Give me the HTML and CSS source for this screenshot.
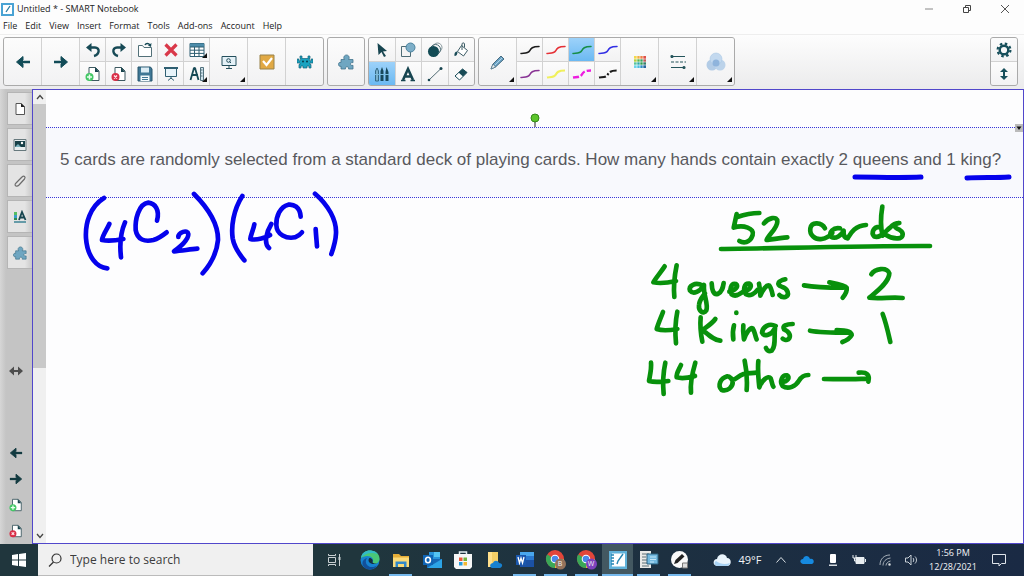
FILE: index.html
```html
<!DOCTYPE html>
<html lang="en">
<head>
<meta charset="utf-8">
<title>Untitled * - SMART Notebook</title>
<link rel="stylesheet" href="styles.css">
</head>
<body>
<svg class="sprites" aria-hidden="true">
  <symbol id="left" viewBox="0 0 16 16"><path d="M15 8H4" stroke="currentColor" stroke-width="2.6"/><path d="M8 2.500 1.500 8 8 13.500V10L6 8l2-2z" fill="currentColor" stroke="currentColor"/></symbol>
  <symbol id="right" viewBox="0 0 16 16"><path d="M1 8h11" stroke="currentColor" stroke-width="2.6"/><path d="M8 2.500 14.500 8 8 13.500V10l2-2-2-2z" fill="currentColor" stroke="currentColor"/></symbol>
  <symbol id="page-add" viewBox="0 0 16 16"><path d="M4 1.500h6.500L14 5v9.500H4z" fill="#fff" stroke="#3d5960"/><path d="M10 1v5h4z" fill="#17434c"/><circle cx="4.500" cy="11" r="4" fill="#43c765"/><path d="M4.500 8.500v5M2 11h5" stroke="#e9fff0" stroke-width="1.500"/></symbol>
  <symbol id="page-del" viewBox="0 0 16 16"><path d="M4 1.500h6.500L14 5v9.500H4z" fill="#fff" stroke="#3d5960"/><path d="M10 1v5h4z" fill="#17434c"/><circle cx="4.500" cy="11" r="4" fill="#d92f48"/><path d="m3 9.500 3 3m0-3-3 3" stroke="#ffe6ea" stroke-width="1.400"/></symbol>
  <symbol id="puzzle" viewBox="0 0 16 16"><path d="M3 5.500h3.500C5 4 6 1 8.500 1S12 4 10.500 5.500H15v3.200c-1.500-.5-2.500.2-2.500 1.300s1 1.800 2.500 1.300V15h-4.500c.5-1.500-.5-2.200-1.500-2.200S7 13.500 7.500 15H3v-2.800C1.500 12.800.500 11.800.500 10.300S1.500 8 3 8.500z" fill="#6fa6c1" stroke="#44758d" stroke-width=".8"/></symbol>
  <symbol id="curve" viewBox="0 0 20 10"><path d="M1 8.500C4 8 8 8.500 9.500 6S12 1.500 19 1.500" fill="none" stroke="currentColor" stroke-width="1.500" stroke-linecap="round"/></symbol>
  <symbol id="chrome" viewBox="0 0 22 22"><circle cx="10" cy="10" r="9" fill="#e2463a"/><path d="M10 10 2.200 5.500A9 9 0 0 0 10 19l4-7z" fill="#3aa757"/><path d="M10 10h9a9 9 0 0 1-9 9z" fill="#f8c335"/><circle cx="10" cy="10" r="4.300" fill="#fff"/><circle cx="10" cy="10" r="3.300" fill="#4a88ec"/></symbol>
</svg>

<header class="titlebar">
  <svg class="app-icon" viewBox="0 0 13 13" aria-hidden="true"><path d="M1 1h11v11H1z" fill="#fff" stroke="#4aa3d4" stroke-width="2"/><path d="m5 9 4-6" stroke="#26799f" stroke-width="1.300"/></svg>
  <h1 class="title">Untitled * - SMART Notebook</h1>
  <div class="window-controls">
    <button aria-label="Minimize"><svg viewBox="0 0 10 10"><path d="M1 5h8" stroke="#888"/></svg></button>
    <button aria-label="Restore"><svg viewBox="0 0 10 10" fill="none" stroke="#444"><path d="M1.500 3.500h5v5h-5zM3.500 3V1.500h5v5H7"/></svg></button>
    <button aria-label="Close"><svg viewBox="0 0 10 10"><path d="m1 1 8 8m0-8-8 8" stroke="#555"/></svg></button>
  </div>
</header>

<nav class="menubar" aria-label="Menu">
  <button>File</button><button>Edit</button><button>View</button><button>Insert</button><button>Format</button><button>Tools</button><button>Add-ons</button><button>Account</button><button>Help</button>
</nav>

<div class="toolbar">
  <div class="group main-group">
    <button class="tall" aria-label="Previous page"><svg class="i16"><use href="#left"/></svg></button>
    <button class="tall" aria-label="Next page"><svg class="i16"><use href="#right"/></svg></button>
    <button aria-label="Undo"><svg class="i16" viewBox="0 0 16 16"><path d="M4 5.500h6c5 0 5 7-1 8.500" fill="none" stroke="#174a56" stroke-width="2.400"/><path d="M6.500 1 1 5.500 6.500 10z" fill="#174a56"/></svg></button>
    <button aria-label="Redo"><svg class="i16" viewBox="0 0 16 16"><path d="M12 5.500H6c-5 0-5 7 1 8.500" fill="none" stroke="#174a56" stroke-width="2.400"/><path d="M9.500 1 15 5.500 9.500 10z" fill="#174a56"/></svg></button>
    <button aria-label="Open"><svg class="i16" viewBox="0 0 16 16" fill="none" stroke="#527078"><path d="M1.500 14.500v-11h4l1.500 2h7.500v9z" fill="#fff"/><path d="M8 3c1-2 3.500-2 5 0" stroke="#174a56" stroke-width="1.500"/><path d="m14.500 1-.5 4-3-1.500z" fill="#174a56" stroke="none"/></svg></button>
    <button aria-label="Delete"><svg class="i16" viewBox="0 0 16 16"><path d="m2.500 2.500 11 11m0-11-11 11" stroke="#d93849" stroke-width="3.200"/></svg></button>
    <button class="more" aria-label="Table"><svg class="i16" viewBox="0 0 16 16"><path d="M1 1.500h14v13H1z" fill="#fff" stroke="#2f5f72"/><path d="M1 1.500h14V5H1z" fill="#4c8caa"/><path d="M1 5h14M1 8.200h14M1 11.400h14M5.500 5v9.500M10 5v9.500" stroke="#2f5f72"/></svg></button>
    <button class="tall more" aria-label="Screen shade"><svg class="i16" viewBox="0 0 16 16" fill="none" stroke="#244f5c"><path d="M1 2.500h14v9H1z" fill="#e4f1f7"/><path d="M5 14.500h6M8 11.500v3M10 9 8.500 7.500"/><circle cx="7.500" cy="6.500" r="1.800"/></svg></button>
    <button class="tall" aria-label="Assessment"><svg class="i16" viewBox="0 0 16 16"><path d="M1 1h14v14H1z" fill="#e1a944" stroke="#98824b"/><path d="m4 7 3.500 4L13 4" fill="none" stroke="#fff" stroke-width="2.200"/></svg></button>
    <button class="tall" aria-label="Activity builder"><svg class="i16" viewBox="0 0 16 16"><path d="M3 2h2v2.500h6V2h2v2.500h-1L13 7h1V5h2v4h-3v1.500h1V14h-2v-2h-2v2H6v-2H4v2H2v-3.500h1V9H0V5h2v2h1l1-2.500H3z" fill="#18a3c1" stroke="#17647c" stroke-width=".7"/><circle cx="6" cy="7.500" r="1" fill="#063b4b"/><circle cx="10" cy="7.500" r="1" fill="#063b4b"/></svg></button>
    <button aria-label="Add page"><svg class="i16"><use href="#page-add"/></svg></button>
    <button aria-label="Delete page"><svg class="i16"><use href="#page-del"/></svg></button>
    <button aria-label="Save"><svg class="i16" viewBox="0 0 16 16"><path d="M1 1h12.500L15 3v12H1z" fill="#3f7795" stroke="#28566c"/><path d="M4 1.500h8v5H4z" fill="#dcecf4"/><path d="M3.500 9.500h9V15h-9z" fill="#f4fafc"/><path d="M5 11.500h6M5 13.500h6" stroke="#3f7795"/></svg></button>
    <button aria-label="Screen"><svg class="i16" viewBox="0 0 16 16" fill="none" stroke="#2f5f72"><path d="M2.500 2.500h11v8h-11z" fill="#e8f4fa"/><path d="M1 2h14" stroke-width="2"/><path d="M8 10v3m-3 1.500L8 12l3 2.500"/></svg></button>
    <button class="more" aria-label="Measurement tools"><svg class="i16" viewBox="0 0 16 16" fill="none"><path d="M5 2 1.500 14M6 2l3.500 12M3 9h6" stroke="#174a56" stroke-width="1.800"/><circle cx="5.500" cy="2.500" r="1.500" fill="#174a56"/><path d="M11.500 1.500h3v13h-3z" fill="#cfe4ee" stroke="#52717d"/><path d="M12 4h1.500M12 7h1.500M12 10h1.500" stroke="#52717d"/></svg></button>
  </div>

  <div class="group addon-group">
    <button class="tall" aria-label="Add-ons"><svg class="i16"><use href="#puzzle"/></svg></button>
  </div>

  <div class="group tools-group">
    <button aria-label="Select"><svg class="i14" viewBox="0 0 14 14"><path d="M2.500 0 12 8 8 8.500l3 4.500-2 1-2.500-5L3.500 12z" fill="#174550"/></svg></button>
    <button aria-label="Shapes"><svg class="i16" viewBox="0 0 16 16"><path d="M1.500 4.500h9v10h-9z" fill="#f4f4f4" stroke="#4e6c76"/><circle cx="10.500" cy="5.500" r="4.500" fill="#7daec8" stroke="#4b839e"/></svg></button>
    <button aria-label="Regular polygons"><svg class="i16" viewBox="0 0 16 16"><circle cx="10.500" cy="5.500" r="4.500" fill="none" stroke="#8a9a9f"/><circle cx="8.500" cy="7.500" r="5" fill="none" stroke="#4b6b74"/><circle cx="6.500" cy="9.500" r="5.500" fill="#124a54"/></svg></button>
    <button aria-label="Fill"><svg class="i16" viewBox="0 0 16 16"><path d="m8.500 3.500 6 5-4 5.500-6-4.500z" fill="#fff" stroke="#3c5c65"/><path d="M9 8V2c0-1.500 2.500-1.500 2.500 0v3.500" fill="none" stroke="#3c5c65"/><path d="M4.500 9.500C2 9.500 1 11.500 1.500 14c2 0 3-1.500 3-4.500z" fill="#174a56"/></svg></button>
    <button class="active" aria-label="Pens"><svg class="i16" viewBox="0 0 16 16"><path d="M1.500 15V5L3 2l1.500 3v10z" fill="#7ab1cc" stroke="#336b88"/><path d="M6.500 15V5L8 1l1.500 4v10zM11.500 15V6l1-5 2 5v9z" fill="#17485c"/><path d="M1 8.500h14" stroke="#77bce0"/></svg></button>
    <button aria-label="Text"><svg class="i16" viewBox="0 0 16 16"><path d="m3 14 5-11 5 11M5 10.500h6" fill="none" stroke="#174550" stroke-width="2.600"/><path d="M1 14.500h4.500m5 0H15" stroke="#174550" stroke-width="1.500"/></svg></button>
    <button aria-label="Line"><svg class="i16" viewBox="0 0 16 16"><path d="M2 14 14 2.500" stroke="#526c74"/><circle cx="2" cy="14" r="1.300" fill="#174550"/><circle cx="14" cy="2.500" r="1.500" fill="#174550"/></svg></button>
    <button aria-label="Eraser"><svg class="i14" viewBox="0 0 14 14"><path d="M1 9 8.500 2 13 5.500 5.500 13z" fill="#fff" stroke="#174a56"/><path d="M4.500 5.500 8.500 2 13 5.500l-4 4z" fill="#174a56"/></svg></button>
  </div>

  <div class="group pens-group">
    <button class="tall more" aria-label="Pen type"><svg class="i16" viewBox="0 0 16 16"><path d="m1 15 2-5 8-8 3 3-8.500 8z" fill="#6aa2c4" stroke="#476b80"/><path d="m1 15 2-5 2.500 3z" fill="#e9edef" stroke="#476b80" stroke-width=".6"/><path d="M5 11 12 4" stroke="#b1d4e7"/></svg></button>
    <button aria-label="Black pen"><svg class="pen black"><use href="#curve"/></svg></button>
    <button aria-label="Red pen"><svg class="pen red"><use href="#curve"/></svg></button>
    <button class="active" aria-label="Green pen"><svg class="pen green"><use href="#curve"/></svg></button>
    <button aria-label="Blue pen"><svg class="pen blue"><use href="#curve"/></svg></button>
    <button class="tall more" aria-label="Color"><svg class="i12" viewBox="0 0 12 12"><path d="M0 0h3v3H0z" fill="#f3d94d"/><path d="M3 0h3v3H3z" fill="#f1ad43"/><path d="M6 0h3v3H6z" fill="#ed8249"/><path d="M9 0h3v3H9z" fill="#dd5148"/><path d="M0 3h3v3H0z" fill="#b3cf43"/><path d="M3 3h3v3H3z" fill="#58b44c"/><path d="M6 3h3v3H6z" fill="#3aa360"/><path d="M9 3h3v3H9z" fill="#bd5a58"/><path d="M0 6h3v3H0z" fill="#59c49c"/><path d="M3 6h3v3H3z" fill="#29a7a6"/><path d="M6 6h3v3H6z" fill="#2f9d50"/><path d="M9 6h3v3H9z" fill="#397e68"/><path d="M0 9h3v3H0z" fill="#6bd4ea"/><path d="M3 9h3v3H3z" fill="#4dbde0"/><path d="M6 9h3v3H6z" fill="#318fc5"/><path d="M9 9h3v3H9z" fill="#28679e"/><path d="M0 3h12M0 6h12M0 9h12M3 0v12M6 0v12M9 0v12" stroke="#fff" stroke-width=".6"/></svg></button>
    <button class="tall more" aria-label="Line style"><svg class="i16" viewBox="0 0 16 16" fill="none" stroke="#24545a" stroke-width="1.200"><path d="M2 2.500h13M1 13.500h13"/><path d="M1 8h15" stroke-dasharray="3 1.500"/><circle cx="2" cy="2.500" r="1" fill="#24545a"/><circle cx="14" cy="13.500" r="1" fill="#24545a"/></svg></button>
    <button class="tall more" aria-label="Transparency"><svg class="i20" viewBox="0 0 20 20"><circle cx="6" cy="13" r="5.500" fill="#b3cce6"/><circle cx="14" cy="13" r="5.500" fill="#bcd3ea"/><circle cx="10" cy="7" r="6" fill="#c3d9ef" stroke="#a9c7e4" stroke-width=".6"/><circle cx="10" cy="11" r="3.500" fill="#8fb4dc"/></svg></button>
    <button aria-label="Purple pen"><svg class="pen purple"><use href="#curve"/></svg></button>
    <button aria-label="Yellow highlighter"><svg class="pen yellow" viewBox="0 0 20 10"><path d="M1 8.500C4 8 8 8.500 9.500 6S12 1.500 19 1.500" fill="none" stroke="currentColor" stroke-width="2.200"/></svg></button>
    <button aria-label="Magenta dashed pen"><svg class="pen magenta" viewBox="0 0 20 10"><path d="M1 8.500C4 8 8 8.500 9.500 6S12 1.500 19 1.500" fill="none" stroke="currentColor" stroke-width="2.400" stroke-dasharray="6 2"/></svg></button>
    <button aria-label="Black dashed pen"><svg class="pen black" viewBox="0 0 20 10"><path d="M1 8.500C4 8 8 8.500 9.500 6S12 1.500 19 1.500" fill="none" stroke="currentColor" stroke-width="2.200" stroke-dasharray="7 2 2 2"/></svg></button>
  </div>

  <div class="group settings-group">
    <button aria-label="Customize toolbar"><svg class="i16" viewBox="0 0 16 16"><circle cx="8" cy="8" r="4.300" fill="none" stroke="#174f5b" stroke-width="2.400"/><circle cx="8" cy="8" r="6.400" fill="none" stroke="#174f5b" stroke-width="2.200" stroke-dasharray="2.500 2.530"/></svg></button>
    <button aria-label="Move toolbar"><svg class="i14" viewBox="0 0 14 14"><path d="M7 3v8" stroke="#174f5b" stroke-width="2"/><path d="m7 1 4 4H3zM7 13l4-4H3z" fill="#174f5b"/></svg></button>
  </div>
</div>

<main class="workspace">
  <aside class="sidebar">
    <div class="tabs">
      <button aria-label="Page sorter"><svg class="i14" viewBox="0 0 14 14"><path d="M3 1.500h5L11.500 5v7.500H3z" fill="#fff" stroke="#555"/><path d="M8 1v4h4z" fill="#222"/></svg></button>
      <button aria-label="Gallery"><svg class="i14" viewBox="0 0 14 14"><path d="M1 1.500h12v11H1z" fill="#e9eeef" stroke="#67797d"/><path d="M2 3h10v6H2z" fill="#174047"/><path d="m2 9 3-3 3 3z" fill="#79b2bd"/><circle cx="9" cy="5" r="1.200" fill="#fff"/></svg></button>
      <button aria-label="Attachments"><svg class="i14" viewBox="0 0 14 14"><path d="m3 9 6-6c2-2 4 0 2.500 2L6 11c-2 2-5 1-3.500-1.500L8 4" fill="none" stroke="#6c6c6c" stroke-width="1.200"/></svg></button>
      <button aria-label="Properties"><svg class="i14" viewBox="0 0 14 14"><path d="M1 2h3v3H1z" fill="#56bd62"/><path d="M1 5h3v3H1z" fill="#3b9fc9"/><path d="M1 8h3v2H1z" fill="#2e8c4f"/><path d="m6 10 3-8 3.500 8M7 7.500h4.500" fill="none" stroke="#174550" stroke-width="1.800"/><path d="M1 12h12" stroke="#3d8395" stroke-width="1.500"/></svg></button>
      <button aria-label="Add-ons tab"><svg class="i14"><use href="#puzzle"/></svg></button>
    </div>
    <button class="resize" aria-label="Move sidebar"><svg class="i16" viewBox="0 0 16 16"><path d="M3 8h10" stroke="#4d4d4d" stroke-width="2"/><path d="M6 3.500 1 8l5 4.500zm4 0L15 8l-5 4.500z" fill="#4d4d4d"/></svg></button>
    <div class="page-nav">
      <button aria-label="Back"><svg class="i14"><use href="#left"/></svg></button>
      <button aria-label="Forward"><svg class="i14"><use href="#right"/></svg></button>
      <button aria-label="Insert page"><svg class="i14"><use href="#page-add"/></svg></button>
      <button aria-label="Remove page"><svg class="i14"><use href="#page-del"/></svg></button>
    </div>
  </aside>

  <div class="scrollbar">
    <button aria-label="Scroll up"><svg viewBox="0 0 8 8"><path d="m1 6 3-3.500L7 6" fill="none" stroke="#444" stroke-width="1.300"/></svg></button>
    <div class="track"><div class="thumb"></div></div>
    <button aria-label="Scroll down"><svg viewBox="0 0 8 8"><path d="m1 2 3 3.500L7 2" fill="none" stroke="#444" stroke-width="1.300"/></svg></button>
  </div>

  <section class="canvas" aria-label="Page">
    <div class="question">
      <p>5 cards are randomly selected from a standard deck of playing cards. How many hands contain exactly 2 queens and 1 king?</p>
      <svg class="rotate-handle" viewBox="0 0 12 16" aria-hidden="true"><path d="M6 8v7" stroke="#222"/><circle cx="6" cy="6" r="4" fill="#5cc52b" stroke="#348819"/></svg>
      <button class="object-menu" aria-label="Object menu"><svg viewBox="0 0 8 8"><path d="M1.500 2.500h5L4 6z" fill="#111"/></svg></button>
    </div>
    <svg class="ink" viewBox="0 0 978 453" role="img" aria-label="Handwritten notes: (4C2)(4C1); 52 cards, 4 queens to 2, 4 kings to 1, 44 other">
      <g class="stroke-blue thick"><path d="M809 87c20 0 45 1 66 0M921 88c14-1 28 0 42-1"/></g>
      <svg x="24" y="90" width="290" height="110" viewBox="0 0 870 330" overflow="visible">
        <g class="stroke-blue">
          <path d="M102 54C60 80 45 130 48 175c4 55 32 87 64 90"/>
          <path d="M118 132c-8 18-20 33-22 48 19 4 49 0 64-3M165 127c-10 23-17 63-12 105"/>
          <path d="M261 122c9-32-6-52-26-54-30 4-40 52-38 82 5 30 28 36 53 30 18-5 30-15 40-23"/>
          <path d="M325 171c0-14 28-24 30-9 1 18-25 38-43 52 23-2 48-6 70-8"/>
          <path d="M372 42c38 38 73 88 72 138-4 45-24 75-46 100"/>
          <path d="M517 48c-27 42-34 92-29 127 5 30 22 50 35 66"/>
          <path d="M553 133c-3 17-11 32-12 44 19 5 49-5 59-12M604 132c-14 23-24 58-7 72"/>
          <path d="M692 110c-2-30-22-38-37-36-25 6-37 36-36 61 1 30 31 42 56 37 10-4 17-10 21-15"/>
          <path d="M737 147c1 18 3 38 4 52M735 41c40 34 65 79 63 119-1 25-8 45-14 62"/>
        </g>
      </svg>
      <svg x="594" y="105" width="300" height="110" viewBox="0 0 900 330" overflow="visible">
        <g class="stroke-green">
          <path d="M290 57l-9 41c29-10 64 2 57 22-8 25-28 25-40 18M292 66c23-8 48-12 66-12"/>
          <path d="M372 85c13-17 40-23 40-5 0 20-27 40-32 55 20-3 45-7 62-8"/>
          <path d="M555 100c-10-18-40-22-44 0-3 20 14 35 34 32 15-2 25-10 32-18M600 100c-20-4-34 12-27 25 14 9 32-5 38-18-1 13 2 22 12 23 8-12 18-37 55-40"/>
          <path d="M727 35c-5 30-5 65 1 87M722 96c-22-2-30 18-19 29 17 6 32-15 47-27 7-8 18-14 28-14-23 4-14 14 0 20 18 12 10 28-8 26-20 0-26-6-33-11"/>
          <path d="M243 162c157-2 457-10 627-9"/>
          <path d="M74 214c-14 21-26 34-34 48 20 4 50 0 68-4M110 211c-7 34-10 64-7 95"/>
          <path d="M188 272c-22-12-43 0-38 15 10 13 30 3 42-17-3 30 14 57 7 76-8 13-24 4-22-16 1-15 11-25 18-35"/>
          <path d="M215 265c1 18 4 35 18 32 14-6 16-20 18-33"/>
          <path d="M268 290c17-2 30-17 20-23-16-4-20 17-13 31 13 10 25-2 38-10 18-3 25-17 15-22-16-2-20 19-10 32 12 7 27-3 34-13"/>
          <path d="M357 266c3 15 4 25 4 36 7-17 19-34 27-30 6 8 8 18 10 28"/>
          <path d="M436 253c-21 5-29 15-11 22 20 5 23 25 13 30-10 3-16 0-20-5"/>
          <path d="M492 271c38 7 78 7 118 7M568 262c22 4 47 8 52 16 2 12-5 22-12 30"/>
          <path d="M694 238c11-18 46-23 54-3 0 27-38 55-60 73 32 4 72-3 100 1"/>
        </g>
      </svg>
      <svg x="594" y="210" width="300" height="110" viewBox="0 0 900 330" overflow="visible">
        <g class="stroke-green">
          <path d="M69 36c-7 19-14 34-19 51 20 7 45 3 62 0M112 35c-7 35-7 65-4 95"/>
          <path d="M182 52c-2 23 0 48 5 73M226 57c-11 15-26 23-38 33 17 15 34 30 53 32"/>
          <path d="M289 38v1M282 76c-4 14-4 29-2 42"/>
          <path d="M310 76c-2 19 0 29 2 42 6-18 18-36 26-33 7 10 7 23 12 33"/>
          <path d="M407 78c-19-10-39 2-41 20 6 14 29 7 39-13-3 25 3 55-10 67-10 4-15-2-17-8"/>
          <path d="M458 72c-18 0-33 6-26 16 16 7 23 20 13 30-7 4-15 0-17-2"/>
          <path d="M510 92c30 6 80 6 120 6M590 90c25 0 45 5 45 15-5 10-17 17-28 21"/>
          <path d="M728 42c10 26 17 58 23 84"/>
          <path d="M33 188c2 17-3 37-6 55 18 5 43 2 58 0M76 188c-6 27-8 62-5 94"/>
          <path d="M123 195c-8 17-15 27-13 37 20 6 40 0 55-4M166 188c-8 27-16 62-13 90"/>
          <path d="M262 229c-22 6-30 29-17 41 17 5 35-8 33-27-6-13-16-18-23-11M277 240c12-2 16-12 34-18 13-3 25-2 39-4"/>
          <path d="M314 182c6 28 8 58 6 88M355 183c-2 22 0 52 3 79 7-22 27-37 34-27 4 10 4 20 8 25"/>
          <path d="M425 246c17 0 27-14 16-20-15-2-23 19-13 32 17 12 40 0 49-16 9-16 18-17 28-17"/>
          <path d="M552 237c48 1 88 1 130-1M656 218c26-3 34 7 29 27"/>
        </g>
      </svg>
    </svg>
  </section>
</main>

<footer class="taskbar">
  <button class="start" aria-label="Start"><svg viewBox="0 0 14 14"><path d="m0 2 6-1v5.500H0zM7 .900 14 0v6.500H7zM0 7.500h6V13l-6-1zM7 7.500h7V14l-7-.9z" fill="#fff"/></svg></button>
  <label class="search">
    <svg viewBox="0 0 14 14" aria-hidden="true"><circle cx="8.500" cy="5.500" r="4.500" fill="none" stroke="#333" stroke-width="1.200"/><path d="M5.500 9 1 13.500" stroke="#333" stroke-width="1.300"/></svg>
    <input type="text" placeholder="Type here to search" aria-label="Search">
  </label>
  <button class="task-view" aria-label="Task View"><svg class="i14" viewBox="0 0 14 14" fill="none" stroke="#c9d0d3"><path d="M1.500 4.500h7v5h-7zM1.500 1v1.500h7V1M1.500 13v-1.500h7V13M12.500 1v12"/><path d="M12.500 4v3" stroke-width="2"/></svg></button>
  <div class="apps">
    <button aria-label="Edge"><svg class="i20" viewBox="0 0 20 20"><circle cx="10" cy="10" r="9.500" fill="#1682d0"/><path d="M1 8C2 2 7 0 11 .600c6 .6 9 5 8.500 9-.5 4-5 5-7 3.500 2-4-1-7-5-7-3 0-5 1-6.500 2z" fill="#49c677"/><path d="M1 8C2 2 7 0 11 .600c3 .4 5 1.400 6.500 3.400C11 2 5 3 1 8z" fill="#32b9c8"/><path d="M7 8c-3 4 0 9 5 9 2 0 4-.5 5.500-2-4 6-11 5.500-14 1.500C1 13 3 9 7 8z" fill="#124f99"/><path d="M9.500 8c-2 2-1 5 3 6 2 .3 4-.3 5-1-2 1-5 .5-5-1 1-2-1-4-3-4z" fill="#162d3c"/></svg></button>
    <button class="open" aria-label="File Explorer"><svg class="i18" viewBox="0 0 18 18"><path d="M1 3h6l2 2h8v11H1z" fill="#e5ae38"/><path d="M1 6.500h16V16H1z" fill="#fbda78"/><path d="M3.500 16v-5.500h11V16H12v-3H6v3z" fill="#3289c9"/></svg></button>
    <button aria-label="Outlook"><svg class="i20" viewBox="0 0 20 20"><path d="M7 2h11v10H7z" fill="#2894dc"/><path d="M12 2h6v5h-6z" fill="#54c5f4"/><path d="M5 9h15v9H5z" fill="#1769b5"/><path d="m5 18 15-9v9z" fill="#2ca4e6"/><path d="M1 5h10v10H1z" fill="#0f65b5"/><ellipse cx="6" cy="10" rx="2.400" ry="2.800" fill="none" stroke="#fff" stroke-width="1.600"/></svg></button>
    <button aria-label="Microsoft Store"><svg class="i20" viewBox="0 0 20 20"><path d="M6.500 5V2h7v3" fill="none" stroke="#e4eef3" stroke-width="1.500"/><path d="M1 4h18v13l-2 2H3l-2-2z" fill="#f6f7f7"/><path d="M6 7.500h3.500V11H6z" fill="#ef5636"/><path d="M10.500 7.500H14V11h-3.500z" fill="#71b33d"/><path d="M6 12h3.500v3.500H6z" fill="#269ddc"/><path d="M10.500 12H14v3.500h-3.500z" fill="#f4b832"/></svg></button>
    <button aria-label="OneDrive folder"><svg class="i18" viewBox="0 0 18 18"><path d="M3 1h10v15H3z" fill="#f4cf67"/><path d="M3 1h4v15H3z" fill="#ffe08c"/><path d="M7 17c-3-1-2-5 1-5 1-3 5-3 6 0 4 0 4 4 1 5z" fill="#1781d0"/></svg></button>
    <button class="open" aria-label="Word"><svg class="i20" viewBox="0 0 20 20"><path d="M5 2h14v5H5z" fill="#49a7ee"/><path d="M5 6h14v5H5z" fill="#2b79d0"/><path d="M5 10h14v7H5z" fill="#1b51a4"/><path d="M1 5h10v10H1z" fill="#1a57ad"/><path d="m3 7 1.500 6L6 8l1.500 5L9 7" fill="none" stroke="#fff" stroke-width="1.300"/></svg></button>
    <button class="open" aria-label="Chrome, profile B"><svg class="i22" viewBox="0 0 22 22"><use href="#chrome"/><circle cx="15.500" cy="15" r="5.500" fill="#93735c"/></svg><span class="profile">B</span></button>
    <button class="open" aria-label="Chrome, profile W"><svg class="i22" viewBox="0 0 22 22"><use href="#chrome"/><circle cx="15.500" cy="15" r="5.500" fill="#7d42bd"/></svg><span class="profile">W</span></button>
    <button class="open current" aria-label="SMART Notebook"><svg class="i20" viewBox="0 0 20 20"><path d="M1 1h18v18H1z" fill="#61b2da"/><path d="M4 3.500h13v13H4z" fill="#fff"/><path d="m9 14 1-3 5-7M3 5h3M3 8h3M3 11h3M3 14h3" stroke="#2785b2" stroke-width="1.400" fill="none"/></svg></button>
    <button class="open" aria-label="Document viewer"><svg class="i20" viewBox="0 0 20 20"><path d="M1 1h11v17H1z" fill="#e8e9e7"/><path d="M3 4h7M3 7h4M3 10h6M3 13h7M3 16h7" stroke="#8a989c" stroke-width="1.500"/><path d="M8 4h11v10H8z" fill="#73b9df" stroke="#2c6281"/><path d="M11 7h6M11 9.500h6M11 12h4" stroke="#c5e6f7"/></svg></button>
    <button class="open" aria-label="SMART Ink"><svg class="i20" viewBox="0 0 20 20"><circle cx="9.500" cy="9.500" r="8.500" fill="#fafafa"/><path d="m4 14 1.500-4L12 4l2.500 2.500-7 6.500z" fill="#222"/><path d="M12.500 13h5v5h-5z" fill="#ddd" stroke="#777"/></svg></button>
  </div>
  <div class="tray">
    <button class="weather"><svg viewBox="0 0 18 14" aria-hidden="true"><path d="M4 13C-1 12 0 6 4 6c1-6 9-6 10-1 5 0 5 8 0 8z" fill="#e9f4fc"/><path d="M4 13c-3-1-3-4-1-5 4 3 9 4 14 2-1 2-2 3-3 3z" fill="#a9d3f4"/></svg><span>49°F</span></button>
    <button aria-label="Show hidden icons"><svg class="i12" viewBox="0 0 12 12"><path d="m1.500 8.500 4.500-5 4.500 5" fill="none" stroke="#dce2e6"/></svg></button>
    <button aria-label="OneDrive"><svg class="i14" viewBox="0 0 14 14"><path d="M3 11c-4-1-3-5 0-5 1-4 6-4 7 0 4-1 5 4 2 5z" fill="#168ae0"/></svg></button>
    <button aria-label="Microphone"><svg class="i14" viewBox="0 0 14 14"><rect x="4" y="1" width="6" height="9" rx="1" fill="#fff"/><path d="M3 11.500h8v1.500H3z" fill="#d5dbe0"/></svg></button>
    <button aria-label="Battery"><svg class="i14" viewBox="0 0 14 14"><path d="M4 4.500h8v6H4z" fill="#e8edf0" stroke="#e8edf0"/><path d="M13 6h1v3h-1z" fill="#e8edf0"/><path d="M1 2v3h3V2M2.500 5v3H5" fill="none" stroke="#e8edf0"/></svg></button>
    <button aria-label="Wi-Fi"><svg class="i14" viewBox="0 0 14 14" fill="none" stroke="#a7b0b9"><path d="M2 12C2 6 6 2 12 2M5 12.500c0-4 3-7 7.500-7.500M8 12.500c0-2 2-4 4.500-4.500"/><circle cx="11.500" cy="11.500" r="1" fill="#ddd"/></svg></button>
    <button aria-label="Volume"><svg class="i14" viewBox="0 0 14 14" fill="none" stroke="#c7cfd6"><path d="M1.500 5v4H4l3 3V2L4 5z"/><path d="M9 5c1 1 1 3 0 4M11 3.500c2 2 2 5 0 7"/></svg></button>
    <button class="clock"><time>1:56 PM</time><time>12/28/2021</time></button>
    <button class="notify" aria-label="Notifications"><svg class="i14" viewBox="0 0 14 14"><path d="M.500 1.500h13v9H9.500L7 13V10.500H.500z" fill="none" stroke="#dfe4ea"/></svg></button>
  </div>
</footer>
</body>
</html>
```
FILE: styles.css
```css
* { box-sizing: border-box; }

body {
  margin: 0;
  height: 100vh;
  display: flex;
  flex-direction: column;
  overflow: hidden;
  background: #fdfdfd;
  color: #222;
  font: 9px/12px "Open Sans", "Noto Sans", sans-serif;
}

button {
  margin: 0;
  padding: 0;
  border: 0;
  background: none;
  color: inherit;
  font: inherit;
  display: flex;
  align-items: center;
  justify-content: center;
}

svg { display: block; flex: none; }
.sprites { width: 0; height: 0; position: absolute; }
.i12 { width: 12px; height: 12px; }
.i14 { width: 14px; height: 14px; }
.i16 { width: 16px; height: 16px; }
.i18 { width: 18px; height: 18px; }
.i20 { width: 20px; height: 20px; }
.i22 { width: 22px; height: 22px; }

.titlebar { display: flex; align-items: center; height: 18px; flex: none; padding-left: 1px; gap: 3px; }
.app-icon { width: 13px; height: 13px; }
.title { margin: 0; font-size: 9px; font-weight: 400; }
.window-controls { margin-left: auto; display: flex; }
.window-controls button { width: 38px; height: 18px; }
.window-controls svg { width: 10px; height: 10px; }

.menubar { display: flex; gap: 8px; height: 16px; flex: none; padding: 0 3px; }

.toolbar {
  display: flex;
  flex: none;
  gap: 3px;
  height: 55px;
  padding: 2px 6px 3px 3px;
  border-top: 1px solid #eee;
  background: linear-gradient(#fdfdfd, #ebebec);
}
.group {
  display: grid;
  grid-template-rows: 1fr 1fr;
  gap: 1px;
  border: 1px solid #aaa;
  border-radius: 3px;
  background: #d2d2d2;
  overflow: hidden;
}
.group button { position: relative; background: linear-gradient(#fcfcfc, #f2f2f3); color: #124c58; }
.group .tall { grid-row: span 2; }
.group .active { background: linear-gradient(#9dd2fa, #6bb9f2); }
.group .more::after {
  content: "";
  position: absolute;
  right: 2px;
  bottom: 3px;
  border-left: 5px solid transparent;
  border-bottom: 5px solid #111;
}
.main-group { width: 321px; grid-template-columns: 37px 37px repeat(5, 1fr) 37px 37px 37px; }
.addon-group { width: 38px; }
.tools-group { width: 107px; grid-template-columns: repeat(4, 1fr); }
.pens-group { width: 257px; grid-template-columns: 37px repeat(4, 1fr) 37px 37px 37px; }
.settings-group { width: 28px; margin-left: auto; }

.pen { width: 20px; height: 10px; }
.black { color: #1b1b1b; }
.red { color: #e52f35; }
.green { color: #168d46; }
.blue { color: #322fe4; }
.purple { color: #883394; }
.yellow { color: #f0f05c; }
.magenta { color: #ed1ce0; }

.workspace { flex: 1; min-height: 0; display: flex; }
.sidebar {
  width: 32px;
  flex: none;
  display: flex;
  flex-direction: column;
  padding: 3px 0 0 7px;
  background: linear-gradient(90deg, #d6d6d6, #c4c4c4 6px);
}
.tabs { display: flex; flex-direction: column; gap: 3px; }
.tabs button {
  height: 33px;
  border: 1px solid #b5b5b5;
  border-right: 0;
  background: linear-gradient(90deg, #e4e4e4 70%, #c9c9c9);
}
.resize { width: 18px; height: 22px; margin-top: 91px; }
.page-nav { margin-top: auto; width: 18px; color: #123a40; }
.page-nav button { width: 18px; height: 26px; }

.scrollbar {
  width: 14px;
  flex: none;
  display: flex;
  flex-direction: column;
  border: solid #5147cb;
  border-width: 1px 0 1px 1px;
  background: #f0f0f0;
}
.scrollbar button { height: 14px; flex: none; }
.scrollbar svg { width: 8px; height: 8px; }
.track { flex: 1; }
.thumb { height: 62%; background: #c9c9c9; }

.canvas {
  position: relative;
  flex: 1;
  min-width: 0;
  border: solid #5147cb;
  border-width: 1px 1px 1px 0;
  background: #fdfdfe;
  padding-top: 37px;
}
.question {
  position: relative;
  border: dotted #3a38d8;
  border-width: 1px 0;
  background: #f8f9fd;
  padding: 20px 0 25px 14px;
}
.question p {
  margin: 0;
  color: #58595d;
  font: 17px/24px "Liberation Sans", Arial, sans-serif;
  white-space: nowrap;
}
.rotate-handle { position: absolute; width: 12px; height: 16px; top: -16px; left: 50%; margin-left: -6px; }
.object-menu {
  position: absolute;
  top: -4px;
  right: 0;
  width: 8px;
  height: 8px;
  background: #bbb;
}
.object-menu svg { width: 8px; height: 8px; }
.ink { position: absolute; top: 0; left: 0; width: 978px; height: 453px; pointer-events: none; }
.ink g { fill: none; stroke-width: 14; stroke-linecap: round; stroke-linejoin: round; }
.ink .stroke-blue { stroke: #0502ec; }
.ink .stroke-green { stroke: #08910c; }
.ink .thick { stroke-width: 5; }

.taskbar {
  display: flex;
  flex: none;
  height: 32px;
  background: linear-gradient(90deg, #20363d 35%, #1c2e42 75%, #1a2a44);
  color: #f2f4f6;
}
.start { width: 38px; }
.start svg { width: 14px; height: 14px; }
.search {
  width: 275px;
  display: flex;
  align-items: center;
  gap: 8px;
  padding-left: 10px;
  background: #f0f0f0;
  border-bottom: 1px solid #bbb;
}
.search svg { width: 14px; height: 14px; }
.search input {
  flex: 1;
  min-width: 0;
  border: 0;
  padding: 0;
  outline: 0;
  background: none;
  font: 12px/16px "Open Sans", "Noto Sans", sans-serif;
}
.search input::placeholder { color: #3c3c3c; opacity: 1; }
.task-view { width: 41px; }
.apps { display: flex; }
.apps button { position: relative; width: 31px; }
.apps .open::after {
  content: "";
  position: absolute;
  left: 4px;
  right: 4px;
  bottom: 0;
  height: 2px;
  background: #76b9ed;
}
.apps .current { background: #435861; }
.apps .current::after { left: 0; right: 0; }
.profile {
  position: absolute;
  left: 15px;
  top: 15px;
  width: 10px;
  font-size: 7px;
  line-height: 10px;
  text-align: center;
}

.tray { display: flex; margin-left: auto; padding-right: 2px; }
.tray button { width: 26px; }
.tray .weather { width: 54px; gap: 8px; font-size: 11px; margin-right: 4px; }
.weather svg { width: 18px; height: 14px; }
.tray .clock { width: 58px; flex-direction: column; line-height: 14px; }
.tray .notify { width: 34px; margin-right: 6px; }
```
